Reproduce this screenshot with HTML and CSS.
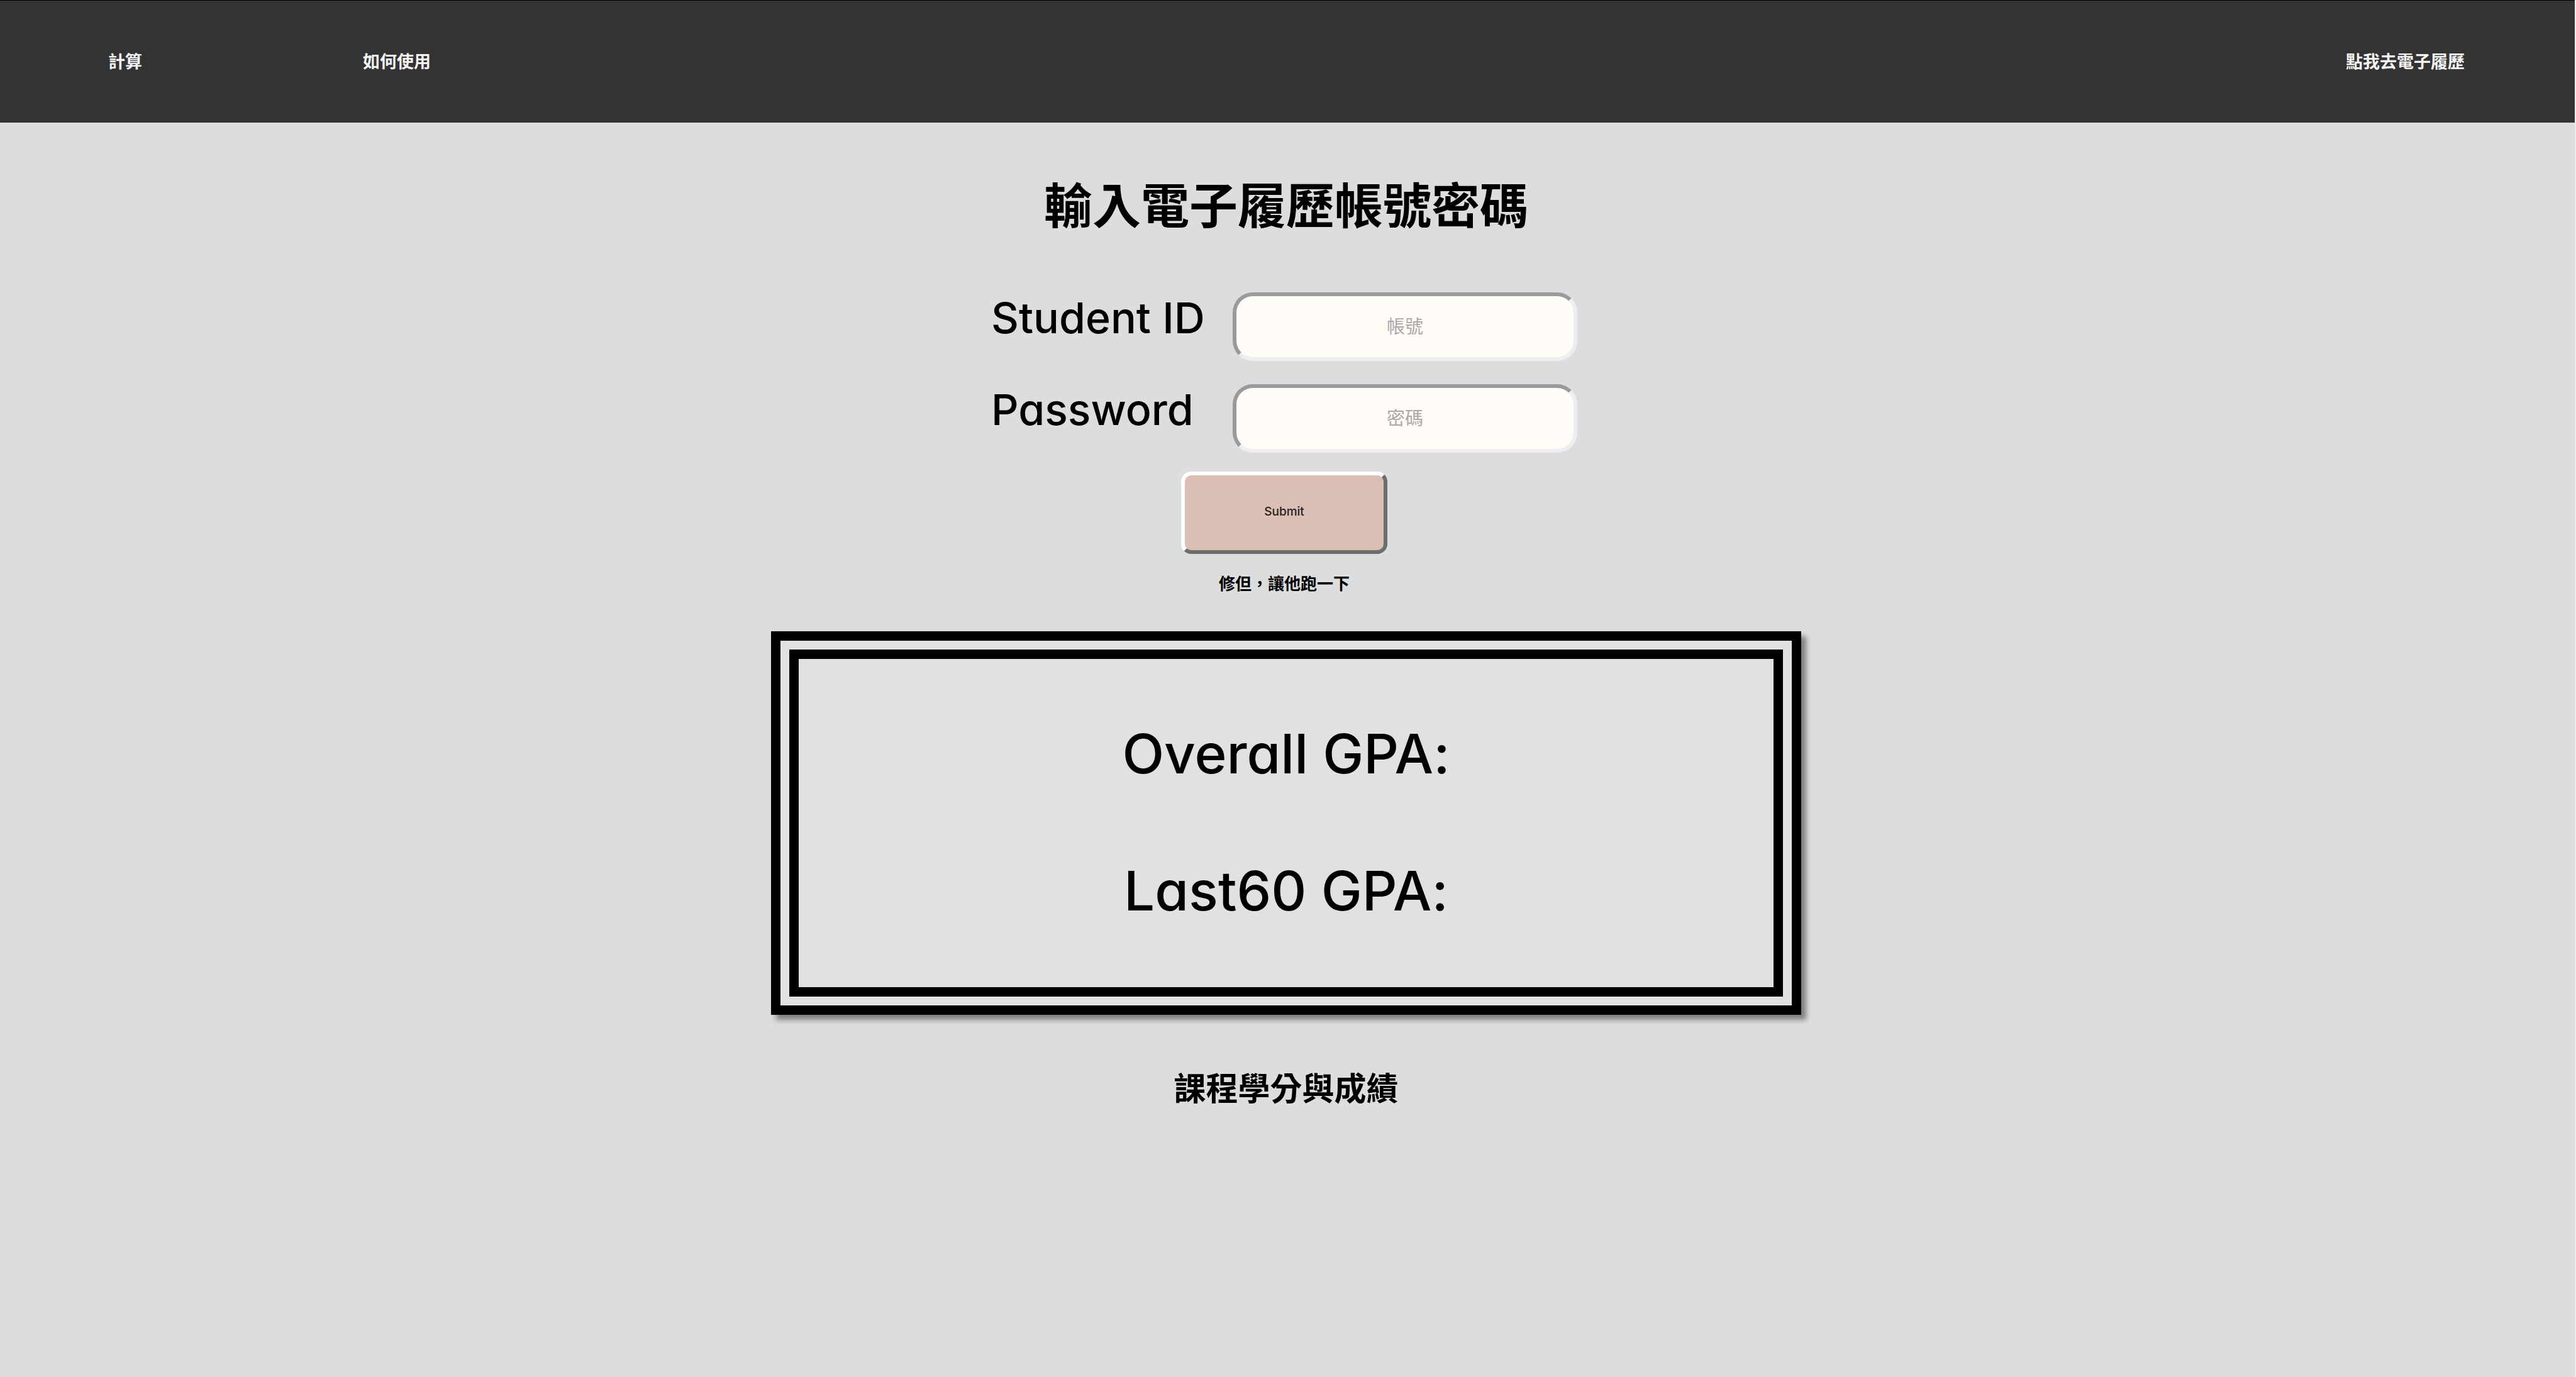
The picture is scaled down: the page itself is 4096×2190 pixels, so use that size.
FILE: index.html
```html
<!DOCTYPE html>
<html lang="zh-Hant">
<head>
<meta charset="utf-8">
<meta name="viewport" content="width=device-width, initial-scale=1">
<title>GPA 計算</title>
<link rel="stylesheet" href="styles.css">
</head>
<body>
<div class="page">
  <header class="header">
    <nav class="nav">
      <a class="nav-link" href="#calc">計算</a>
      <a class="nav-link" href="#howto">如何使用</a>
      <a class="nav-link nav-link-end" href="#portfolio">點我去電子履歷</a>
    </nav>
  </header>
  <main class="main" id="calc">
    <h1 class="title">輸入電子履歷帳號密碼</h1>
    <form class="login">
      <div class="fields">
        <label class="label" for="student-id">Student ID</label>
        <input class="input" id="student-id" type="text" placeholder="帳號">
        <label class="label" for="password">Password</label>
        <input class="input" id="password" type="password" placeholder="密碼">
      </div>
      <button class="submit" type="submit">Submit</button>
      <p class="note">修但，讓他跑一下</p>
    </form>
    <section class="result">
      <p class="gpa">Overall GPA:</p>
      <p class="gpa">Last60 GPA:</p>
    </section>
    <h2 class="subtitle">課程學分與成績</h2>
  </main>
</div>
</body>
</html>
```
FILE: styles.css
```css
* {
  box-sizing: border-box;
}

body {
  margin: 0;
  background: #ececec;
  color: #000;
  font-family: Inter, "Noto Sans CJK TC", sans-serif;
  font-feature-settings: "cv11", "calt" 0;
}

.page {
  min-height: 100vh;
  margin-right: 2px;
  background: #dcdddf;
}

.header {
  padding: 78px 175px 76px 172px;
  border-top: 1px solid #000;
  background: #333;
}

.nav {
  display: flex;
  gap: 351px;
}

.nav-link {
  color: #f3f3f3;
  font-size: 27px;
  font-weight: 700;
  line-height: 40px;
  text-decoration: none;
}

.nav-link-end {
  margin-left: auto;
}

.main {
  display: flex;
  flex-direction: column;
  align-items: center;
  padding: 85px 4px 0 0;
}

.title {
  margin: 0 0 89px;
  font-size: 77px;
  font-weight: 700;
  line-height: 96px;
}

.login {
  display: flex;
  flex-direction: column;
  align-items: center;
  margin: 0 6px 55px 0;
}

.fields {
  display: grid;
  grid-template-columns: 384px 548px;
  gap: 37px 0;
  margin-bottom: 30px;
}

.label {
  align-self: start;
  font-size: 68px;
  font-weight: 550;
  line-height: 80px;
}

.input {
  width: 100%;
  height: 109px;
  padding: 0 24px;
  border: 6px solid;
  border-color: #9a9a9a #eee #eee #9a9a9a;
  border-radius: 32px;
  background: #fffbf6;
  color: #000;
  font: inherit;
  font-size: 29px;
  text-align: center;
}

.input::placeholder {
  color: #a9a9a9;
  opacity: 1;
}

.submit {
  width: 328px;
  height: 131px;
  margin-bottom: 28px;
  padding: 0 0 4px;
  border: 6px solid;
  border-color: #fff #6c6e6d #6c6e6d #fff;
  border-radius: 16px;
  background: #dbbeb4;
  color: #222;
  font: inherit;
  font-size: 19px;
  font-weight: 500;
}

.note {
  margin: 0;
  font-size: 26px;
  font-weight: 700;
  line-height: 40px;
}

.result {
  display: flex;
  flex-direction: column;
  gap: 106px;
  width: 40vw;
  margin-bottom: 86px;
  padding: 95px 0 97px;
  border: 44px double #000;
  background: #e1e1df;
  box-shadow: 8px 8px 8px #7e807e;
  text-align: center;
}

.gpa {
  margin: 0;
  font-size: 87px;
  font-weight: 550;
  line-height: 112px;
}

.subtitle {
  margin: 0;
  font-size: 51px;
  font-weight: 700;
  line-height: 64px;
}
```
